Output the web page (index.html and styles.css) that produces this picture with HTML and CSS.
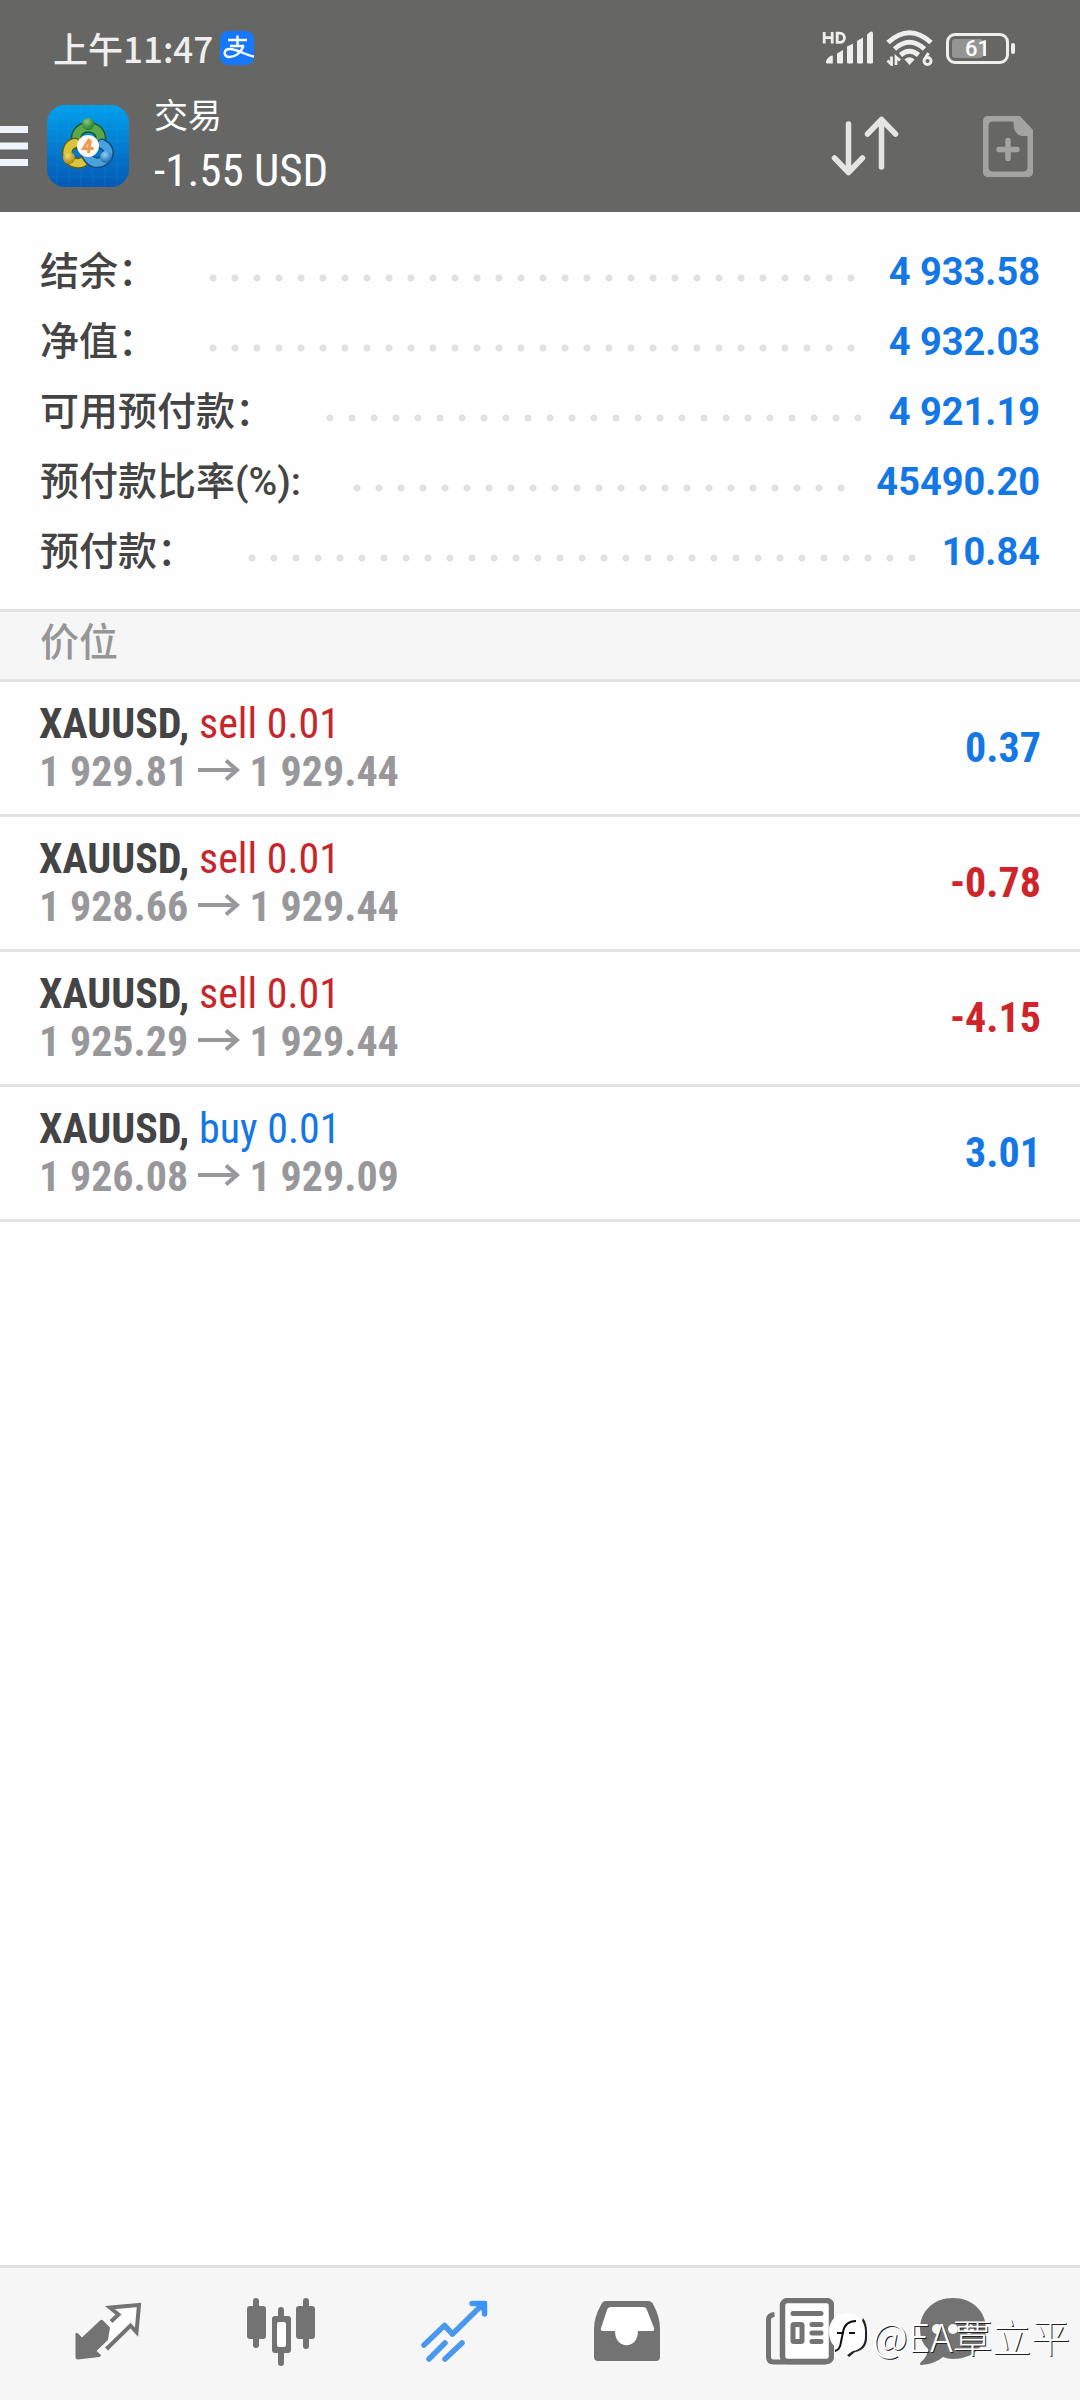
FILE: index.html
```html
<!DOCTYPE html>
<html lang="zh-CN">

<head>
    <meta charset="UTF-8">
    <meta name="viewport" content="width=device-width, initial-scale=1.0">
    <title>交易</title>
    <link rel="stylesheet" href="styles.css">
</head>

<body>
    <header class="header">
        <div class="status-bar">
            <span class="clock">上午11:47</span>
            <svg class="pay-icon" viewBox="0 0 36 36">
                <rect x="1" y="1" width="34" height="34" rx="8" fill="#1677ff" />
                <g fill="none" stroke="#fff" stroke-width="2.4">
                    <path d="M9 10h19M18.500 5.500V16M11 16h14" />
                    <path d="M24.500 16C22 23 16 27 10.500 27C4 27 4 19 11 19C18 19 26 25 35 26.500" />
                </g>
            </svg>
            <div class="status-icons">
                <svg class="signal-icon" viewBox="0 0 52 36">
                    <g fill="none" stroke="#eee" stroke-width="2.800">
                        <path d="M2.200 2v11.500M10.200 2v11.500M2.200 7.700h8M15.200 3.200v9.200h2.400c6.500 0 6.500-9.200 0-9.200z" />
                    </g>
                    <g fill="#eee">
                        <path d="M4 32.500c0-3.500 3-6.500 6.800-7v8h-5.500q-1.300 0-1.300-1z" />
                        <path d="M15 23.500l6-3.500v12.500q0 1-1 1h-4q-1 0-1-1z" />
                        <path d="M25 16.500l6-2.800v18.800q0 1-1 1h-4q-1 0-1-1z" />
                        <path d="M35 11l6-3.500v25q0 1-1 1h-4q-1 0-1-1z" />
                        <path d="M45 4.500l3-2.500q3-1.500 3 1.500v29q0 1-1 1h-4q-1 0-1-1z" />
                    </g>
                </svg>
                <svg class="wifi-icon" viewBox="0 0 48 36">
                    <g fill="none" stroke="#eee" stroke-width="5">
                        <path d="M2 12.500Q23.500 -7 45 12.500" />
                        <path d="M8.500 19Q23.500 5.500 38.500 19" />
                        <path d="M14.500 25Q23.500 17.500 32.500 25" />
                    </g>
                    <path d="M18.500 29.500q5-4.500 10 0l-5 5.500z" fill="#eee" />
                    <path d="M1.500 30.500l4 4V26.500M14 30.500l-4-3.500v8" fill="none" stroke="#eee" stroke-width="2.800" />
                    <g fill="none" stroke="#eee" stroke-width="3">
                        <circle cx="41.500" cy="31" r="3.500" />
                        <path d="M38.500 29.500L42.500 23" />
                    </g>
                </svg>
                <div class="battery">
                    <div class="battery-level"></div>
                    <span class="battery-text">61</span>
                </div>
            </div>
        </div>

        <div class="app-bar">
            <button class="menu-button" aria-label="菜单">
                <svg viewBox="0 0 28 41">
                    <path d="M0 3.500h28M0 20h28M0 36.500h28" stroke="#eef4fb" stroke-width="7" />
                </svg>
            </button>
            <svg class="app-logo" viewBox="0 0 82 82">
                <defs>
                    <linearGradient id="logoBg" x1="0" y1="0" x2="0" y2="1">
                        <stop offset="0" stop-color="#03a0ec" />
                        <stop offset="1" stop-color="#0459b4" />
                    </linearGradient>
                    <radialGradient id="green" cx=".4" cy=".3" r=".7">
                        <stop offset="0" stop-color="#8cc872" />
                        <stop offset="1" stop-color="#1f7a33" />
                    </radialGradient>
                    <radialGradient id="yellow" cx=".4" cy=".3" r=".7">
                        <stop offset="0" stop-color="#f0df72" />
                        <stop offset="1" stop-color="#a5860f" />
                    </radialGradient>
                    <radialGradient id="blue" cx=".4" cy=".3" r=".7">
                        <stop offset="0" stop-color="#8fd0f5" />
                        <stop offset="1" stop-color="#1668ad" />
                    </radialGradient>
                </defs>
                <rect width="82" height="82" rx="18" fill="url(#logoBg)" />
                <path d="M10 1v80M22 0v82M34 0v82M46 0v82M58 0v82M70 0v82M0 12h82M0 24h82M0 36h82M0 48h82M0 60h82M0 72h82" stroke="#3cb4f3" stroke-opacity=".15" />
                <g stroke-linecap="round" fill="none">
                    <path d="M30 39C27 28 33 23 41 22C50 23 56 28 53 39" stroke="#175b2d" stroke-width="11" />
                    <path d="M30 39C27 28 33 23 41 22C50 23 56 28 53 39" stroke="#5aa84a" stroke-width="8" />
                    <path d="M28 38C20 40 19 48 22 54C27 60 35 59 38 55" stroke="#665d13" stroke-width="11" />
                    <path d="M28 38C20 40 19 48 22 54C27 60 35 59 38 55" stroke="#d9c53c" stroke-width="8" />
                    <path d="M55 39C63 43 63 50 58 55C51 60 44 58 40 51" stroke="#124b82" stroke-width="11" />
                    <path d="M55 39C63 43 63 50 58 55C51 60 44 58 40 51" stroke="#4ba1dc" stroke-width="8" />
                </g>
                <circle cx="41" cy="19" r="6" fill="url(#green)" />
                <circle cx="22" cy="53" r="6" fill="url(#yellow)" />
                <circle cx="59" cy="52" r="6" fill="url(#blue)" />
                <circle cx="41" cy="41" r="11" fill="#fdfaf5" />
                <path d="M42.500 34L36.500 43.500h10M43.500 35L41.500 48" fill="none" stroke="#ef9a4c" stroke-width="3" />
            </svg>
            <div class="title">
                <h1>交易</h1>
                <p>-1.55 USD</p>
            </div>
            <button class="sort-button" aria-label="排序">
                <svg viewBox="0 0 68 60">
                    <path d="M17.500 8v48M3.500 42l14 14.500l14-14.500M50.500 51V4M36.500 18l14-14.500l14 14.500" fill="none" stroke="#e4e5e2" stroke-width="5.500" stroke-linecap="round" stroke-linejoin="round" />
                </svg>
            </button>
            <button class="order-button" aria-label="新订单">
                <svg viewBox="0 0 50 61">
                    <path d="M5 0h32l13 14v42q0 5-5 5H5q-5 0-5-5V5Q0 0 5 0zM10 5.500q-4.500 0-4.500 4.500v41q0 4.500 4.500 4.500h30q4.500 0 4.500-4.500V20H40Q30 19 30.500 5.500z" fill="#a3a4a2" fill-rule="evenodd" />
                    <path d="M25 24.500v18M16 33.500h18" stroke="#a3a4a2" stroke-width="5.500" stroke-linecap="round" />
                </svg>
            </button>
        </div>
    </header>

    <main class="content">
        <dl class="summary">
            <div class="summary-row"><dt>结余：</dt><dd>4 933.58</dd></div>
            <div class="summary-row"><dt>净值：</dt><dd>4 932.03</dd></div>
            <div class="summary-row"><dt>可用预付款：</dt><dd>4 921.19</dd></div>
            <div class="summary-row"><dt>预付款比率(%):</dt><dd>45490.20</dd></div>
            <div class="summary-row"><dt>预付款：</dt><dd>10.84</dd></div>
        </dl>

        <h2 class="section-title">价位</h2>

        <ul class="positions">
            <li class="position">
                <div>
                    <p class="symbol"><strong>XAUUSD,</strong> <span class="sell">sell 0.01</span></p>
                    <p class="prices">1 929.81 <svg class="arrow" viewBox="0 0 42 22"><path d="M0 11h39M28 1.500L39 11L28 20.500" /></svg> 1 929.44</p>
                </div>
                <span class="profit">0.37</span>
            </li>
            <li class="position">
                <div>
                    <p class="symbol"><strong>XAUUSD,</strong> <span class="sell">sell 0.01</span></p>
                    <p class="prices">1 928.66 <svg class="arrow" viewBox="0 0 42 22"><path d="M0 11h39M28 1.500L39 11L28 20.500" /></svg> 1 929.44</p>
                </div>
                <span class="profit loss">-0.78</span>
            </li>
            <li class="position">
                <div>
                    <p class="symbol"><strong>XAUUSD,</strong> <span class="sell">sell 0.01</span></p>
                    <p class="prices">1 925.29 <svg class="arrow" viewBox="0 0 42 22"><path d="M0 11h39M28 1.500L39 11L28 20.500" /></svg> 1 929.44</p>
                </div>
                <span class="profit loss">-4.15</span>
            </li>
            <li class="position">
                <div>
                    <p class="symbol"><strong>XAUUSD,</strong> <span class="buy">buy 0.01</span></p>
                    <p class="prices">1 926.08 <svg class="arrow" viewBox="0 0 42 22"><path d="M0 11h39M28 1.500L39 11L28 20.500" /></svg> 1 929.09</p>
                </div>
                <span class="profit">3.01</span>
            </li>
        </ul>
    </main>

    <nav class="tab-bar">
        <a href="#quotes" aria-label="行情">
            <svg viewBox="0 0 68 68">
                <path d="M29 22.500L40 33.500Q41 35 40 36L22.500 53L27 57Q27 59 25 59L4 61.500Q1.500 61.500 1.500 59V36Q2 34 4 35.500L8 39.500L26 22.500Q27.500 21 29 22.500z" fill="#737373" />
                <path d="M37 23.500L44.500 16.500L36 9.500L65 7L62.500 34L56.500 27.500L32.500 51" fill="#fff" />
                <path d="M37 23.500L44.500 16.500L36 9.500L65 7L62.500 34L56.500 27.500L32.500 51" fill="none" stroke="#737373" stroke-width="4" />
            </svg>
        </a>
        <a href="#chart" aria-label="图表">
            <svg viewBox="0 0 68 68">
                <g fill="#737373">
                    <rect x="6" y="0" width="6" height="50" rx="3" />
                    <rect x="0" y="8" width="19" height="33" rx="3" />
                    <rect x="31" y="9" width="6" height="59" rx="3" />
                    <rect x="25" y="18" width="19" height="37" rx="3" />
                    <rect x="56" y="0" width="6" height="51" rx="3" />
                    <rect x="49" y="8" width="19" height="33" rx="3" />
                </g>
                <rect x="30" y="24" width="9" height="25" rx="2" fill="#fff" />
            </svg>
        </a>
        <a href="#trade" aria-label="交易">
            <svg viewBox="0 0 68 68">
                <g fill="none" stroke="#4a98ee" stroke-width="5.500" stroke-linecap="round" stroke-linejoin="round">
                    <path d="M4 47L24.500 27.500L32.500 36L63 6M52 5.500h12.500V16" />
                    <path d="M9 61L25 45M25 61L42 45" />
                </g>
                <path d="M52 3h15v15z" fill="#3993fb" />
            </svg>
        </a>
        <a href="#history" aria-label="历史">
            <svg viewBox="0 0 68 68">
                <path d="M13 3h42q4 0 5.500 4Q67 19 67 31v28q0 4-4 4H5q-4 0-4-4V31Q1 19 8 7q1.500-4 5-4z" fill="#737373" />
                <path d="M18 9h32q3 0 4 3l7 18q1 3-2 3H45c0 19-23 19-23 0H10q-3 0-2-3l6-18q1-3 4-3z" fill="#fff" />
            </svg>
        </a>
        <a href="#news" aria-label="新闻">
            <svg viewBox="0 0 68 68">
                <rect x="16.500" y="2.500" width="49" height="61" rx="5" fill="#fff" stroke="#737373" stroke-width="5.500" />
                <path d="M8.500 16.500Q2.500 17 2.500 22v37q0 5 5 5h52" fill="none" stroke="#737373" stroke-width="5" />
                <path d="M27 15.500h28M46 26.500h9M46 35h9M46 43.500h9" stroke="#737373" stroke-width="5" stroke-linecap="round" />
                <rect x="27" y="26.500" width="9" height="17" rx="1" fill="#fff" stroke="#737373" stroke-width="5" />
            </svg>
        </a>
        <a href="#mail" aria-label="消息">
            <svg viewBox="0 0 68 68">
                <path d="M34 0C53 0 67 13 67 31S53 61 34 61q-5 0-10-2Q16 66 2 67q-2-1 0-3Q9 58 9 51Q1 44 1 31C1 13 15 0 34 0z" fill="#737373" />
                <g fill="#f6f6f6">
                    <circle cx="18" cy="31" r="5" />
                    <circle cx="34" cy="31" r="5" />
                    <circle cx="50" cy="31" r="5" />
                </g>
            </svg>
        </a>
        <div class="watermark">
            <svg viewBox="0 0 38 44">
                <path d="M34 5Q38 10 38 19V25C38 33 33 38 26 39L20 44L18 42L24 36z" fill="#222" />
                <path d="M18 0C29 0 36 8 36 18V24C36 32 31 37 24 38L18 42L16 36C5 36 0 30 0 18C0 8 7 0 18 0z" fill="#fff" />
                <path d="M6 38Q11 37 12 29L14 19Q16 8 27 8M8 20h7M20 20h6" fill="none" stroke="#111" stroke-width="2" />
            </svg>
            <span>@EA覃立平</span>
        </div>
    </nav>
</body>

</html>
```
FILE: styles.css
```css
* {
    box-sizing: border-box;
    margin: 0;
    padding: 0;
}

body {
    display: flex;
    flex-direction: column;
    min-height: 100vh;
    background-color: #fefefe;
    color: #444;
    font-family: Roboto, "Noto Sans CJK SC", sans-serif;
}

svg {
    display: block;
}

button {
    background: none;
    border: none;
    cursor: pointer;
}

/* header */
.header {
    background-color: #666764;
    color: #fff;
}

.status-bar {
    display: flex;
    align-items: center;
    height: 96px;
    padding: 0 64px 0 53px;
}

.clock {
    color: #eee;
    font-family: "Noto Sans CJK SC", sans-serif;
    font-size: 35px;
    font-weight: 500;
    line-height: 48px;
}

.pay-icon {
    width: 36px;
    height: 36px;
    margin-left: 6px;
}

.status-icons {
    display: flex;
    align-items: center;
    gap: 12px;
    margin-left: auto;
}

.signal-icon {
    width: 52px;
    height: 36px;
}

.wifi-icon {
    width: 48px;
    height: 36px;
}

.battery {
    position: relative;
    width: 63px;
    height: 31px;
    margin-right: 7px;
    padding: 3px;
    border: 3px solid #eee;
    border-radius: 9px;
}

.battery::after {
    content: "";
    position: absolute;
    top: 7px;
    right: -9px;
    width: 4px;
    height: 11px;
    border-radius: 2px;
    background-color: #eee;
}

.battery-level {
    width: 61%;
    height: 100%;
    border-radius: 3px;
    background-color: #949593;
}

.battery-text {
    position: absolute;
    inset: 0;
    color: #fff;
    font-size: 22px;
    font-weight: 500;
    line-height: 25px;
    text-align: center;
}

.app-bar {
    display: flex;
    align-items: center;
    height: 116px;
    padding: 0 47px 16px 0;
}

.menu-button {
    width: 28px;
    height: 41px;
}

.app-logo {
    width: 82px;
    height: 82px;
    margin-left: 19px;
}

.title {
    margin-left: 25px;
}

.title h1 {
    font-size: 34px;
    font-weight: 400;
    line-height: 50px;
}

.title p {
    font-family: "Roboto Condensed", Roboto, sans-serif;
    font-size: 45px;
    line-height: 60px;
}

.sort-button {
    width: 68px;
    height: 60px;
    margin-left: auto;
}

.order-button {
    width: 50px;
    height: 61px;
    margin-left: 84px;
}

/* account summary */
.content {
    flex: 1;
}

.summary {
    padding: 25px 40px 22px;
}

.summary-row {
    display: flex;
    align-items: center;
    line-height: 70px;
}

.summary-row dt {
    font-size: 39px;
    font-weight: 500;
}

.summary-row dd {
    display: grid;
    flex: 1;
    grid-template-columns: 1fr auto;
    align-items: center;
    gap: 12px;
    margin-left: 45px;
    color: #1477e6;
    font-size: 38px;
    font-weight: 700;
    white-space: nowrap;
}

/* dotted leader, only whole dots */
.summary-row dd::before {
    content: "";
    width: round(down, 100%, 22px);
    height: 20px;
    background: radial-gradient(circle, #e1e1e1 3px, transparent 4px) left bottom / 22px 8px repeat-x;
}

.section-title {
    height: 73px;
    padding: 3px 40px;
    border-top: 3px solid #e3e3e3;
    border-bottom: 3px solid #e3e3e3;
    background-color: #f6f6f6;
    color: #969696;
    font-size: 39px;
    font-weight: 500;
    line-height: 56px;
}

/* open positions */
.positions {
    list-style: none;
}

.position {
    display: flex;
    align-items: center;
    justify-content: space-between;
    height: 135px;
    padding: 0 39px;
    border-bottom: 3px solid #e3e3e3;
    font-family: "Roboto Condensed", Roboto, sans-serif;
    font-size: 42px;
    line-height: 48px;
}

.sell {
    color: #c6272c;
}

.buy {
    color: #1477e6;
}

.prices {
    color: #98989b;
    font-weight: 700;
}

.arrow {
    display: inline-block;
    width: 42px;
    height: 22px;
    vertical-align: 5px;
    fill: none;
    stroke: #98989b;
    stroke-width: 4;
}

.profit {
    color: #1477e6;
    font-weight: 700;
}

.loss {
    color: #cd2529;
}

/* bottom navigation */
.tab-bar {
    position: relative;
    display: grid;
    grid-template-columns: repeat(5, 173fr) 134fr;
    height: 135px;
    padding: 30px 60px 0 21px;
    border-top: 3px solid #e0e0e0;
    background-color: #f6f6f6;
}

.tab-bar a {
    justify-self: center;
    height: 68px;
}

.tab-bar a svg {
    width: 68px;
    height: 68px;
}

.watermark {
    position: absolute;
    right: 10px;
    bottom: 38px;
    display: flex;
    align-items: center;
    gap: 5px;
    color: #fff;
    font-family: "Noto Sans CJK SC", sans-serif;
    font-size: 39px;
    font-weight: 300;
    line-height: 54px;
    text-shadow: 1px 1px 0 #222;
}

.watermark svg {
    width: 38px;
    height: 44px;
}
```
